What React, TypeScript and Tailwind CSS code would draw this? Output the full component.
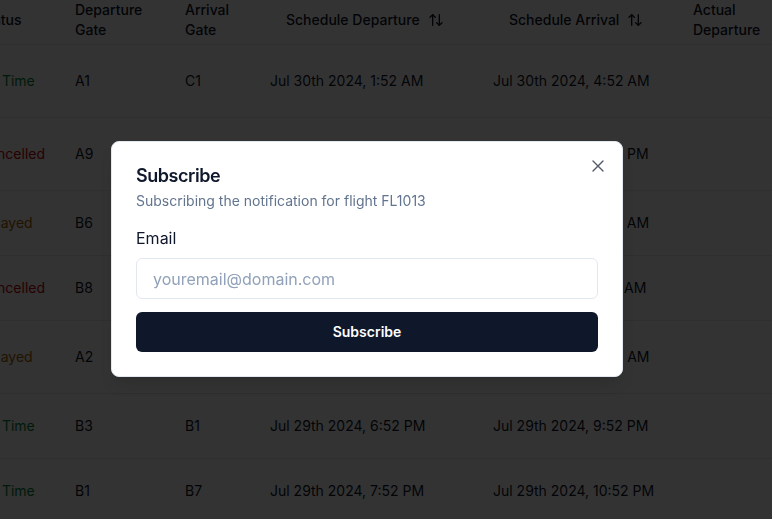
import { ArrowUpDown, X } from 'lucide-react';

type FlightStatus = 'On Time' | 'Cancelled' | 'Delayed';

interface FlightRow {
  status: FlightStatus;
  departureGate: string;
  arrivalGate: string;
  scheduleDeparture: string;
  scheduleArrival: string;
  tall: boolean;
}

const rows: FlightRow[] = [
  { status: 'On Time', departureGate: 'A1', arrivalGate: 'C1', scheduleDeparture: 'Jul 30th 2024, 1:52 AM', scheduleArrival: 'Jul 30th 2024, 4:52 AM', tall: true },
  { status: 'Cancelled', departureGate: 'A9', arrivalGate: 'C4', scheduleDeparture: 'Jul 30th 2024, 0:52 PM', scheduleArrival: 'Jul 30th 2024, 3:52 PM', tall: true },
  { status: 'Delayed', departureGate: 'B6', arrivalGate: 'A3', scheduleDeparture: 'Jul 29th 2024, 11:52 PM', scheduleArrival: 'Jul 30th 2024, 2:52 AM', tall: false },
  { status: 'Cancelled', departureGate: 'B8', arrivalGate: 'C2', scheduleDeparture: 'Jul 29th 2024, 10:52 PM', scheduleArrival: 'Jul 30th 2024, 1:52 AM', tall: false },
  { status: 'Delayed', departureGate: 'A2', arrivalGate: 'B5', scheduleDeparture: 'Jul 29th 2024, 9:52 PM', scheduleArrival: 'Jul 30th 2024, 0:52 AM', tall: true },
  { status: 'On Time', departureGate: 'B3', arrivalGate: 'B1', scheduleDeparture: 'Jul 29th 2024, 6:52 PM', scheduleArrival: 'Jul 29th 2024, 9:52 PM', tall: false },
  { status: 'On Time', departureGate: 'B1', arrivalGate: 'B7', scheduleDeparture: 'Jul 29th 2024, 7:52 PM', scheduleArrival: 'Jul 29th 2024, 10:52 PM', tall: false },
];

const statusColor: Record<FlightStatus, string> = {
  'On Time': 'text-green-700',
  Cancelled: 'text-red-700',
  Delayed: 'text-yellow-700',
};

function SortHeader({ label }: { label: string }) {
  return (
    <button className="inline-flex h-10 items-center rounded-md px-4 font-medium text-slate-900">
      {label}
      <ArrowUpDown className="ml-2 h-4 w-4" strokeWidth={2} />
    </button>
  );
}

export default function App() {
  return (
    <div className="relative min-h-[519px] bg-white font-['Inter',sans-serif] text-sm text-slate-900">
      <div className="w-full overflow-hidden">
        <table className="ml-[-37px] w-[1080px] table-fixed border-collapse text-left">
          <colgroup>
            <col className="w-[96px]" />
            <col className="w-[110px]" />
            <col className="w-[85px]" />
            <col className="w-[223px]" />
            <col className="w-[200px]" />
            <col className="w-[110px]" />
            <col className="w-[110px]" />
            <col className="w-[146px]" />
          </colgroup>
          <thead>
            <tr className="border-b border-slate-200">
              <th className="h-11 px-4 pt-0 align-top font-medium leading-5 text-slate-900">
                <div className="flex h-10 items-center">Status</div>
              </th>
              <th className="h-11 px-4 align-top font-medium leading-5 text-slate-900">Departure Gate</th>
              <th className="h-11 px-4 align-top font-medium leading-5 text-slate-900">Arrival Gate</th>
              <th className="h-11 px-4 align-top">
                <SortHeader label="Schedule Departure" />
              </th>
              <th className="h-11 px-4 align-top">
                <SortHeader label="Schedule Arrival" />
              </th>
              <th className="h-11 px-4 align-top font-medium leading-5 text-slate-900">Actual Departure</th>
              <th className="h-11 px-4 align-top font-medium leading-5 text-slate-900">Actual Arrival</th>
              <th className="h-11 px-4 align-top font-medium leading-5 text-slate-900">Action</th>
            </tr>
          </thead>
          <tbody>
            {rows.map((r, i) => (
              <tr key={i} className="border-b border-slate-200">
                <td className={`${r.tall ? 'h-[73px]' : 'h-[65px]'} px-4 align-middle ${statusColor[r.status]}`}>
                  {r.status}
                </td>
                <td className="px-4 align-middle">{r.departureGate}</td>
                <td className="px-4 align-middle">{r.arrivalGate}</td>
                <td className="px-4 align-middle">{r.scheduleDeparture}</td>
                <td className="px-4 align-middle">{r.scheduleArrival}</td>
                <td className="px-4 align-middle"></td>
                <td className="px-4 align-middle"></td>
                <td className="px-4 align-middle"></td>
              </tr>
            ))}
          </tbody>
        </table>
      </div>

      <div className="fixed inset-0 bg-black/80" />

      <div className="fixed left-[111px] top-[141px] w-[512px] rounded-lg border border-slate-200 bg-white p-6 shadow-lg">
        <button className="absolute right-[14px] top-[14px] text-slate-900 opacity-70">
          <X className="h-5 w-5" strokeWidth={1.6} />
        </button>
        <div className="flex flex-col gap-1.5 pt-px">
          <div className="text-lg font-semibold leading-none tracking-tight text-slate-900">Subscribe</div>
          <div className="text-sm text-slate-500">Subscribing the notification for flight FL1013</div>
        </div>
        <div className="mt-[15px] flex flex-col">
          <label className="text-base text-slate-900">Email</label>
          <input
            className="mt-2 h-[41px] w-full rounded-md border border-slate-200 bg-white px-4 text-base text-slate-900 outline-none placeholder:text-slate-400"
            placeholder="youremail@domain.com"
          />
          <button className="mt-[13px] h-10 w-full rounded-md bg-slate-900 text-sm font-semibold text-white">
            Subscribe
          </button>
        </div>
      </div>
    </div>
  );
}
